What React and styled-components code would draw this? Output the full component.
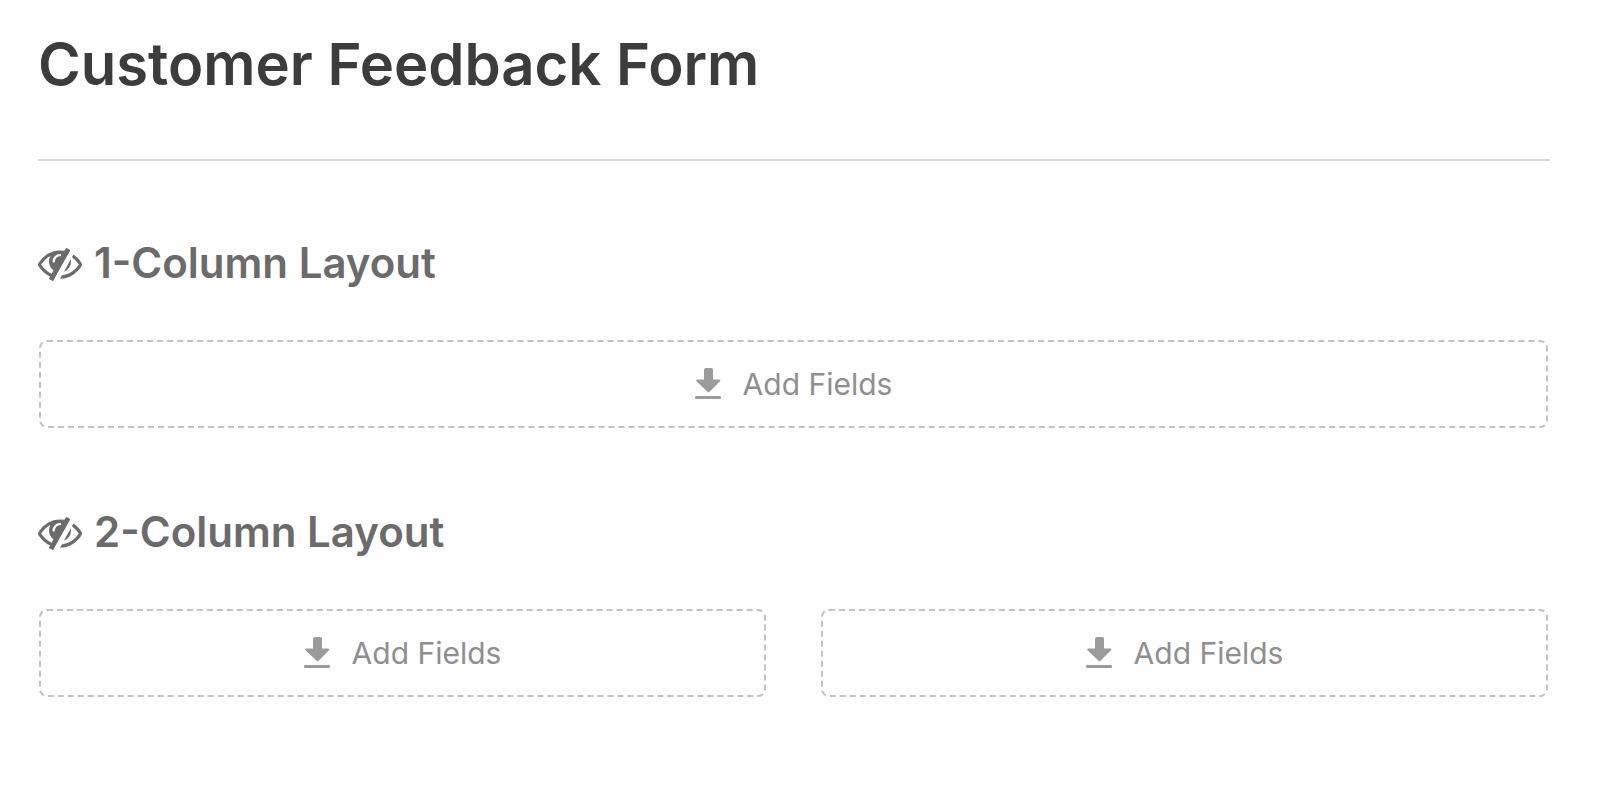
import React from "react";
import styled, { createGlobalStyle } from "styled-components";

const GlobalStyle = createGlobalStyle`
  *, *::before, *::after { box-sizing: border-box; }
  body {
    margin: 0;
    background: #fefefe;
    font-family: Inter, "Liberation Sans", sans-serif;
  }
`;

const Page = styled.main`
  padding: 28px 50px 40px 38px;
`;

const Header = styled.header`
  padding-bottom: 59px;
  border-bottom: 2px solid #d9d9d9;
`;

const Title = styled.h1`
  margin: 0;
  font-size: 58px;
  line-height: 72px;
  font-weight: 600;
  color: #3c3c3c;
`;

const Section = styled.section`
  padding: 74px 2px 2px 0;
`;

const SectionTitle = styled.h2`
  display: flex;
  align-items: center;
  gap: 12px;
  margin: 0 0 49px;
  font-size: 42px;
  line-height: 56px;
  font-weight: 600;
  color: #6b6b6b;
`;

const HiddenIcon = styled.svg`
  flex: none;
  width: 44px;
  height: 44px;
  fill: currentColor;
`;

const Columns = styled.div`
  display: grid;
  grid-template-columns: repeat(${(p) => p.$count}, minmax(0, 1fr));
  gap: 55px;
  padding-left: 1px;
`;

const DropZone = styled.button`
  display: flex;
  align-items: center;
  justify-content: center;
  gap: 22px;
  height: 88px;
  padding: 0 16px;
  border: 2px dashed #c2c2c2;
  border-radius: 8px;
  background: transparent;
  font-family: inherit;
  font-size: 30px;
  line-height: 40px;
  color: #8f8f8f;
  cursor: pointer;
`;

const ArrowIcon = styled.svg`
  flex: none;
  width: 26px;
  height: 32px;
  fill: #9b9b9b;
`;

function EyeSlash() {
  return (
    <HiddenIcon viewBox="0 0 1792 1792" aria-hidden="true">
      <path d="M555 1335l78-141q-87-63-136-159t-49-203q0-121 61-225-229 117-381 353 167 258 427 375zm389-759q0-20-14-34t-34-14q-125 0-214.5 89.5t-89.5 214.5q0 20 14 34t34 14 34-14 14-34q0-86 61-147t147-61q20 0 34-14t14-34zm363-191q0 7-1 9-106 189-316 567t-315 566l-49 89q-10 16-28 16-12 0-134-70-16-10-16-28 0-12 44-87-143-65-263.5-173t-208.5-245q-20-31-20-69t20-69q153-235 380-371t496-136q89 0 180 17l54-97q10-16 28-16 5 0 18 6t31 15.5 33 18.5 31.5 18.5 19.5 11.5q16 10 16 27zm37 447q0 139-79 253.5t-209 164.5l280-502q8 45 8 84zm448 128q0 35-20 69-39 64-109 145-150 172-347.5 267t-419.5 95l74-132q212-18 392.5-137t301.5-307q-115-179-282-294l63-112q95 64 182.5 153t144.5 184q20 34 20 69z" />
    </HiddenIcon>
  );
}

function AddFields() {
  return (
    <DropZone type="button">
      <ArrowIcon viewBox="0 0 26 32" aria-hidden="true">
        <path d="M11 0h5a2 2 0 0 1 2 2v9.5h6.300a1 1 0 0 1 .7 1.700L14.500 23.800a1.400 1.400 0 0 1-2 0L1.500 13.200a1 1 0 0 1 .7-1.700H9V2a2 2 0 0 1 2-2z" />
        <rect x="0" y="28" width="26" height="3" rx="1.200" />
      </ArrowIcon>
      Add Fields
    </DropZone>
  );
}

function LayoutSection({ title, count }) {
  return (
    <Section>
      <SectionTitle>
        <EyeSlash />
        {title}
      </SectionTitle>
      <Columns $count={count}>
        {Array.from({ length: count }, (_, i) => (
          <AddFields key={i} />
        ))}
      </Columns>
    </Section>
  );
}

export default function App() {
  return (
    <>
      <GlobalStyle />
      <Page>
        <Header>
          <Title>Customer Feedback Form</Title>
        </Header>
        <LayoutSection title="1-Column Layout" count={1} />
        <LayoutSection title="2-Column Layout" count={2} />
      </Page>
    </>
  );
}
